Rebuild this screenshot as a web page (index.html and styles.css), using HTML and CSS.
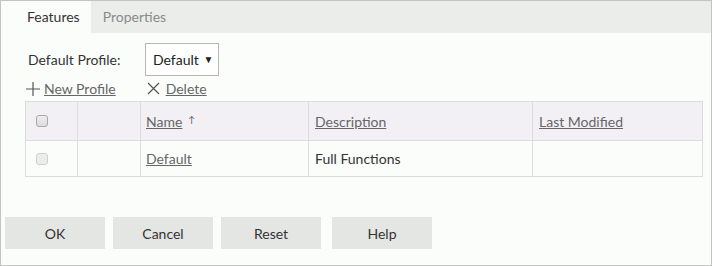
FILE: index.html
```html
<!DOCTYPE html>
<html>

<head>
    <title>Profiles</title>
    <link rel="stylesheet" href="styles.css">
</head>

<body>
    <div class="dialog">
        <div class="tabs">
            <div class="tab active">Features</div>
            <div class="tab">Properties</div>
        </div>

        <div class="panel">
            <div class="profile-row">
                <span class="label">Default Profile:</span>
                <div class="select">Default <span class="caret">&#9660;</span></div>
            </div>

            <div class="toolbar">
                <a class="tool new" href="#">
                    <svg width="16" height="16" viewBox="0 0 16 16"><path d="M8 1v14M1 8h14" stroke="#555" stroke-width="1.2" fill="none"/></svg>
                    <span>New Profile</span>
                </a>
                <a class="tool" href="#">
                    <svg width="13" height="13" viewBox="0 0 13 13"><path d="M1 1l11 11M12 1l-11 11" stroke="#555" stroke-width="1.2" fill="none"/></svg>
                    <span>Delete</span>
                </a>
            </div>

            <table class="grid">
                <tr class="head">
                    <td class="col-check"><span class="checkbox"></span></td>
                    <td class="col-blank"></td>
                    <td class="col-name"><a href="#">Name</a><span class="sort">&#8593;</span></td>
                    <td class="col-desc"><a href="#">Description</a></td>
                    <td><a href="#">Last Modified</a></td>
                </tr>
                <tr>
                    <td class="col-check"><span class="checkbox disabled"></span></td>
                    <td></td>
                    <td class="col-name"><a href="#">Default</a></td>
                    <td>Full Functions</td>
                    <td></td>
                </tr>
            </table>
        </div>

        <div class="buttons">
            <button>OK</button>
            <button>Cancel</button>
            <button>Reset</button>
            <button class="help">Help</button>
        </div>
    </div>
</body>

</html>
```

FILE: styles.css
```css
body {
    margin: 0;
    padding: 0;
    font-family: Lato, "Open Sans", sans-serif;
    font-size: 14px;
    color: #333;
}

/* Outer frame */
.dialog {
    box-sizing: border-box;
    width: 712px;
    height: 266px;
    border: 1px solid #c3c3c3;
    background: #fbfdfb;
    display: flex;
    flex-direction: column;
}

/* Tabs */
.tabs {
    height: 32px;
    background: #ebedea;
    display: flex;
}

.tab {
    line-height: 32px;
    padding: 0 12px;
    color: #8a8a8a;
}

.tab.active {
    background: #fbfdfb;
    color: #333;
    padding: 0 11px 0 26px;
}

.panel {
    padding: 10px 9px 0 24px;
}

.profile-row {
    display: flex;
    align-items: center;
    height: 33px;
}

.label {
    width: 117px;
    padding-left: 3px;
}

.select {
    box-sizing: border-box;
    height: 33px;
    width: 74px;
    border: 1px solid #b8b8b8;
    background: #fff;
    line-height: 31px;
    padding-left: 7px;
    color: #222;
}

.caret {
    font-size: 10px;
    position: relative;
    top: -2px;
    margin-left: 1px;
}

/* New / Delete */
.toolbar {
    display: flex;
    align-items: center;
    height: 25px;
}

.tool {
    display: flex;
    align-items: center;
    color: #666;
    text-decoration: none;
}

.tool.new {
    margin-right: 31px;
}

.tool span {
    text-decoration: underline;
    margin-left: 6px;
}

.tool.new span {
    margin-left: 3px;
}

/* Table */
.grid {
    width: 678px;
    border-collapse: collapse;
}

.grid td {
    border: 1px solid #dcdcdc;
    height: 35px;
    padding: 0 6px;
    text-align: left;
}

.grid tr.head td {
    background: #f2f0f4;
    height: 38px;
}

.grid a {
    color: #666;
}

.col-check {
    width: 35px;
    padding-left: 10px !important;
}

.col-blank {
    width: 50px;
}

.col-name {
    width: 156px;
    padding-left: 5px !important;
}

.col-desc {
    width: 211px;
}

.sort {
    font-size: 9px;
    margin-left: 6px;
    position: relative;
    top: -4px;
    color: #555;
}

.checkbox {
    display: block;
    box-sizing: border-box;
    width: 12px;
    height: 12px;
    border: 1px solid #a9a9a9;
    border-radius: 3px;
    background: linear-gradient(#eeeeee, #dcdcdc);
}

.checkbox.disabled {
    border-color: #cfcfcf;
    background: #ececec;
}

/* Bottom buttons */
.buttons {
    display: flex;
    margin-top: auto;
    padding: 0 0 16px 4px;
}

.buttons button {
    width: 100px;
    height: 32px;
    border: none;
    background: #e4e6e3;
    font-family: Lato, sans-serif;
    font-size: 14px;
    color: #333;
    margin-right: 8px;
}

.buttons button.help {
    margin-left: 3px;
}
```
